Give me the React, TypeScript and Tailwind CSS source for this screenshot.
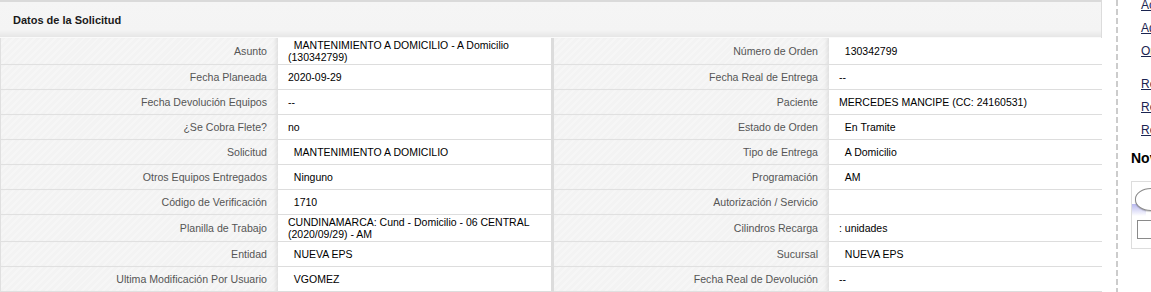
import React from "react";

type Row = { l1: string; v1: string; l2: string; v2: string };

const rows: Row[] = [
  { l1: "Asunto", v1: "\u00a0\u00a0MANTENIMIENTO A DOMICILIO - A Domicilio (130342799)", l2: "Número de Orden", v2: "\u00a0\u00a0130342799" },
  { l1: "Fecha Planeada", v1: "2020-09-29", l2: "Fecha Real de Entrega", v2: "--" },
  { l1: "Fecha Devolución Equipos", v1: "--", l2: "Paciente", v2: "MERCEDES MANCIPE (CC: 24160531)" },
  { l1: "¿Se Cobra Flete?", v1: "no", l2: "Estado de Orden", v2: "\u00a0\u00a0En Tramite" },
  { l1: "Solicitud", v1: "\u00a0\u00a0MANTENIMIENTO A DOMICILIO", l2: "Tipo de Entrega", v2: "\u00a0\u00a0A Domicilio" },
  { l1: "Otros Equipos Entregados", v1: "\u00a0\u00a0Ninguno", l2: "Programación", v2: "\u00a0\u00a0AM" },
  { l1: "Código de Verificación", v1: "\u00a0\u00a01710", l2: "Autorización / Servicio", v2: "" },
  { l1: "Planilla de Trabajo", v1: "CUNDINAMARCA: Cund - Domicilio - 06 CENTRAL (2020/09/29) - AM", l2: "Cilindros Recarga", v2: ": unidades" },
  { l1: "Entidad", v1: "\u00a0\u00a0NUEVA EPS", l2: "Sucursal", v2: "\u00a0\u00a0NUEVA EPS" },
  { l1: "Ultima Modificación Por Usuario", v1: "\u00a0\u00a0VGOMEZ", l2: "Fecha Real de Devolución", v2: "--" },
];

const labelCls =
  "flex items-center justify-end text-right pr-[11px] py-px min-h-[25px] border-b border-[#e0e0e0] text-[#555] text-[10.6px] bg-[repeating-linear-gradient(135deg,#f3f3f3_0px,#f3f3f3_3px,#f6f6f6_3px,#f6f6f6_5px)] shadow-[inset_-5px_0_4px_-3px_rgba(0,0,0,0.09)]";
const valueCls =
  "flex items-center pl-[10px] pr-[6px] py-px min-h-[25px] border-b border-[#dddddd] bg-white text-black text-[10.5px]";

export default function App() {
  return (
    <div
      className="flex w-[1151px] h-[292px] overflow-hidden bg-white text-[12px] leading-[12px]"
      style={{ fontFamily: '"Liberation Sans", Arial, sans-serif' }}
    >
      <div className="w-[1102px] shrink-0 border-r border-[#dcdcdc] flex flex-col">
        <div className="h-[38px] border-t-2 border-[#dadada] bg-[linear-gradient(#f5f5f5_0%,#f4f4f4_80%,#e6e6e6_100%)] flex items-center pl-[13px]">
          <span className="font-bold text-[#1a1a1a] text-[11px]">Datos de la Solicitud</span>
        </div>
        <div className="h-px bg-[#fafafa]" />
        <div className="grid grid-cols-[277px_276px_275px_273px] border-l border-[#e0e0e0]">
          {rows.map((r, i) => (
            <React.Fragment key={i}>
              <div className={labelCls}>{r.l1}</div>
              <div className={valueCls + " border-r-[3px] border-r-[#dcdcdc]"}>{r.v1}</div>
              <div className={labelCls}>{r.l2}</div>
              <div className={valueCls}>{r.v2}</div>
            </React.Fragment>
          ))}
        </div>
      </div>
      <div className="flex shrink-0 ml-[14px]">
        <div className="w-[2px] h-full bg-[linear-gradient(#cccccc_70%,transparent_70%)] bg-[length:2px_9px]" />
        <div className="pl-[13px] w-[300px]">
          <div className="pl-[10px] -mt-[6px] text-[12px]">
            <div className="leading-[23px]"><a className="underline text-[#1b2450]">Actualizar Orden</a></div>
            <div className="leading-[23px]"><a className="underline text-[#1b2450]">Adjuntar Archivo</a></div>
            <div className="leading-[23px]"><a className="underline text-[#1b2450]">Ordenes Relacionadas</a></div>
            <div className="leading-[23px] mt-[10px]"><a className="underline text-[#1b2450]">Reprogramar</a></div>
            <div className="leading-[23px]"><a className="underline text-[#1b2450]">Reasignar</a></div>
            <div className="leading-[23px]"><a className="underline text-[#1b2450]">Registrar Novedad</a></div>
          </div>
          <div className="mt-[7px] h-[18px] leading-[18px] text-[14px] font-bold text-black">Novedades</div>
          <div className="relative mt-[14px] h-[68px] border border-[#dddddd] bg-white">
            <div className="absolute left-0 top-[22px] w-[14px] h-[12px] bg-[linear-gradient(#b9b9ef,#ffffff)]" />
            <div className="relative ml-[3px] mt-[6px] h-[23px] w-[220px] rounded-[16px/11px] border border-[#8a8a8a] bg-white shadow-[0_1px_1px_rgba(0,0,0,0.2)]" />
            <div className="ml-[5px] mt-[9px] h-[19px] w-[220px] border border-[#8a8a8a] bg-white" />
          </div>
        </div>
      </div>
    </div>
  );
}
